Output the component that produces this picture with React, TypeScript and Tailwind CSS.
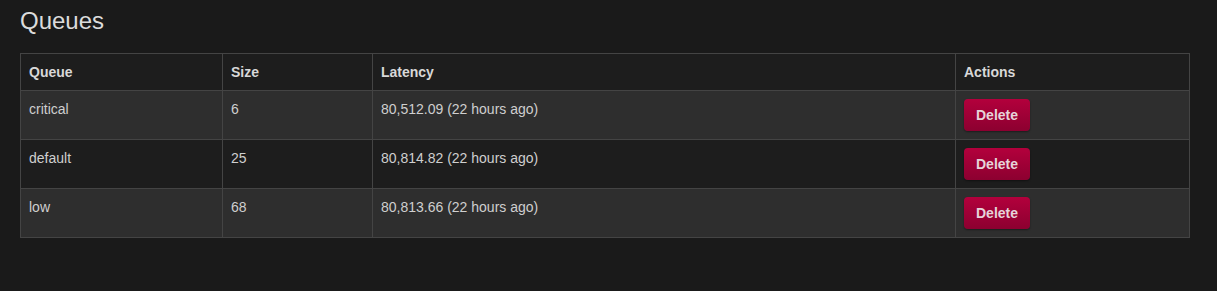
import React from 'react';

type QueueRow = {
  name: string;
  size: number;
  latency: string;
};

const queues: QueueRow[] = [
  { name: 'critical', size: 6, latency: '80,512.09 (22 hours ago)' },
  { name: 'default', size: 25, latency: '80,814.82 (22 hours ago)' },
  { name: 'low', size: 68, latency: '80,813.66 (22 hours ago)' },
];

const App = () => {
  return (
    <div
      className="min-h-[291px] bg-[#1a1a1a] px-5 pt-[8px] pb-10 text-[14px] leading-[20px] text-[#cfcfcf]"
      style={{ fontFamily: '"Liberation Sans", Arial, sans-serif' }}
    >
      <h3 className="text-[24px] leading-[26px] font-normal text-[#dcdcdc] mb-[19px]">Queues</h3>

      <table className="w-[1170px] border-collapse border border-[#444]">
        <thead>
          <tr className="bg-[#1d1d1d] text-left">
            <th className="w-[202px] border border-[#444] px-2 py-2 font-bold text-[#d8d8d8]">Queue</th>
            <th className="w-[150px] border border-[#444] px-2 py-2 font-bold text-[#d8d8d8]">Size</th>
            <th className="w-[583px] border border-[#444] px-2 py-2 font-bold text-[#d8d8d8]">Latency</th>
            <th className="border border-[#444] px-2 py-2 font-bold text-[#d8d8d8]">Actions</th>
          </tr>
        </thead>
        <tbody>
          {queues.map((q, i) => (
            <tr key={q.name} className={i % 2 === 0 ? 'bg-[#2e2e2e]' : 'bg-[#1d1d1d]'}>
              <td className="border border-[#444] px-2 py-2 align-top">{q.name}</td>
              <td className="border border-[#444] px-2 py-2 align-top">{q.size}</td>
              <td className="border border-[#444] px-2 py-2 align-top">{q.latency}</td>
              <td className="border border-[#444] px-2 py-2 align-top">
                <button className="h-8 w-[66px] rounded-[4px] bg-gradient-to-b from-[#b3003c] to-[#8c0030] text-[14px] font-bold text-[#e6d3d9] shadow-[0_1px_2px_rgba(0,0,0,0.4)]">
                  Delete
                </button>
              </td>
            </tr>
          ))}
        </tbody>
      </table>
    </div>
  );
};

export default App;
